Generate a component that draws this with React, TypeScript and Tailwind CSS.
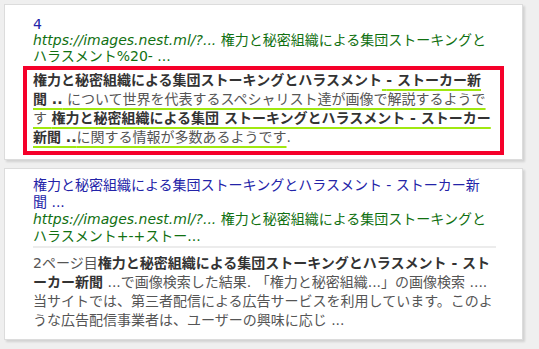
export default function App() {
  const font = "font-['DejaVu_Sans','Noto_Sans_CJK_JP',sans-serif]";
  const ul = 'underline decoration-[#a0e810] decoration-2 underline-offset-[4px]';

  return (
    <div className={`w-[539px] h-[349px] bg-[#efefef] pt-[4px] pl-[4px] ${font}`}>
      <div className="w-[519px] bg-white border border-[#dcdcdc] shadow-[2px_2px_2px_rgba(0,0,0,0.12)] pt-[11px] pb-[4px] px-[18px]">
        <div className="pl-[10px] text-[14px] leading-[16px] whitespace-nowrap">
          <div className="text-[#2323a8]">4</div>
          <div className="text-[#117011]">
            <span className="italic">https://images.nest.ml/?...</span> 権力と秘密組織による集団ストーキングと
            <br />
            ハラスメント%20- ...
          </div>
        </div>
        <div className="mt-[2px] border-4 border-[#f5002a] pl-[6px] pr-[2px] pt-[1px] pb-[4px] text-[14px] leading-[19px] text-[#555] whitespace-nowrap">
          <b className="text-[#333]">権力と秘密組織による集団ストーキングとハラスメント</b>
          <span className={ul}>
            {' '}
            <b className="text-[#333]">- ストーカー新</b>
            <br />
            <b className="text-[#333]">聞 ..</b> について世界を代表するスペシャリスト達が画像で解説するようで
            <br />す <b className="text-[#333]">権力と秘密組織による集団 ストーキングとハラスメント - ストーカー</b>
            <br />
            <b className="text-[#333]">新聞 ..</b>に関する情報が多数あるようです
          </span>
          .
        </div>
      </div>

      <div className="mt-[8px] w-[519px] bg-white border border-[#dcdcdc] shadow-[2px_2px_2px_rgba(0,0,0,0.12)] pt-[8px] pb-[9px] pl-[28px] pr-[12px]">
        <div className="text-[14px] leading-[17px] border-b-2 border-[#ececec] pb-[1px] mr-[14px] whitespace-nowrap">
          <div className="text-[#2323a8]">
            権力と秘密組織による集団ストーキングとハラスメント - ストーカー新
            <br />聞 ...
          </div>
          <div className="text-[#117011]">
            <span className="italic">https://images.nest.ml/?...</span> 権力と秘密組織による集団ストーキングと
            <br />
            ハラスメント+-+ストー...
          </div>
        </div>
        <div className="mt-[6px] text-[14px] leading-[19px] text-[#555] whitespace-nowrap">
          2ページ目<b className="text-[#333]">権力と秘密組織による集団ストーキングとハラスメント - スト</b>
          <br />
          <b className="text-[#333]">ーカー新聞</b> ...で画像検索した結果. 「権力と秘密組織...」の画像検索 ....
          <br />
          当サイトでは、第三者配信による広告サービスを利用しています。このよ
          <br />
          うな広告配信事業者は、ユーザーの興味に応じ ...
        </div>
      </div>
    </div>
  );
}
